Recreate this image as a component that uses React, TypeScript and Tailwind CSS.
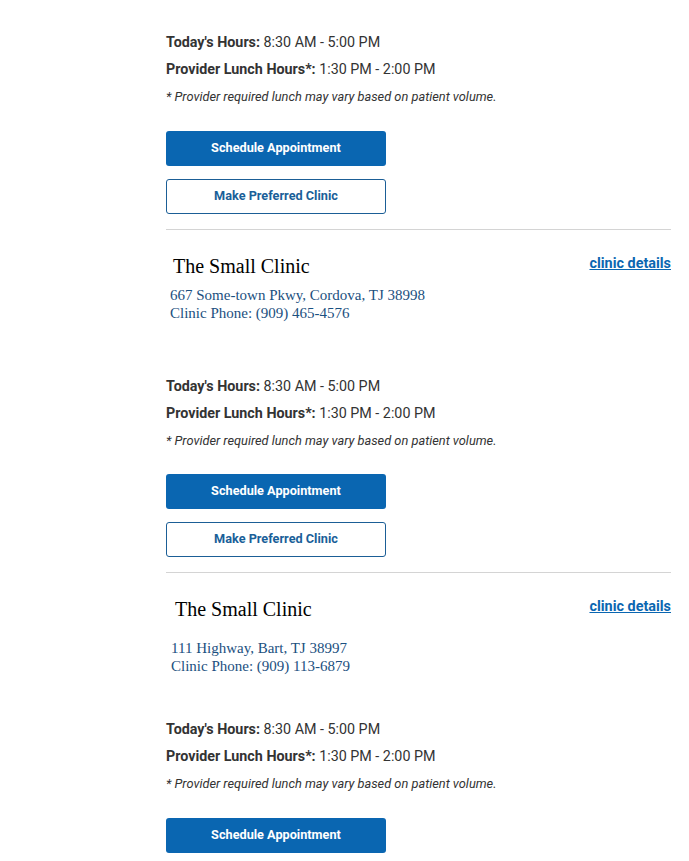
import React from "react";

const roboto = { fontFamily: "Roboto, 'Liberation Sans', sans-serif" };

function Hours() {
  return (
    <div className="font-['Roboto','Liberation_Sans',sans-serif] text-[#333333]">
      <p className="text-[14.3px] leading-[20px]">
        <span className="font-bold">Today's Hours:</span> 8:30 AM - 5:00 PM
      </p>
      <p className="mt-[7px] text-[14.3px] leading-[20px]">
        <span className="font-bold">Provider Lunch Hours*:</span> 1:30 PM - 2:00 PM
      </p>
      <p className="mt-[10px] text-[12.8px] leading-[16px] italic">
        * Provider required lunch may vary based on patient volume.
      </p>
    </div>
  );
}

function Buttons({ second = true, top = "mt-[26px]" }: { second?: boolean; top?: string }) {
  return (
    <div className={`${top} flex flex-col gap-[13px] font-['Roboto','Liberation_Sans',sans-serif]`}>
      <button className="h-[35px] w-[220px] rounded-[3px] bg-[#0a66b1] pb-[2px] text-[12.7px] font-bold text-white">
        Schedule Appointment
      </button>
      {second && (
        <button className="h-[35px] w-[220px] rounded-[3px] border border-[#1b5e96] bg-white pb-[2px] text-[12.7px] font-bold text-[#1a5f99]">
          Make Preferred Clinic
        </button>
      )}
    </div>
  );
}

function Header({
  address,
  phone,
  titlePad,
  addrPad,
  addrGap,
}: {
  address: string;
  phone: string;
  titlePad: string;
  addrPad: string;
  addrGap: string;
}) {
  return (
    <div>
      <div className="flex items-start justify-between">
        <h2 className={`font-['Liberation_Serif',serif] text-[20px] leading-[24px] text-black ${titlePad}`}>
          The Small Clinic
        </h2>
        <a
          href="#"
          className="font-['Roboto','Liberation_Sans',sans-serif] text-[14.4px] font-bold leading-[20px] text-[#0a66b1] underline"
        >
          clinic details
        </a>
      </div>
      <div className={`font-['Liberation_Serif',serif] text-[15px] leading-[18px] text-[#1b5080] ${addrPad} ${addrGap}`}>
        <p>{address}</p>
        <p>Clinic Phone: {phone}</p>
      </div>
    </div>
  );
}

export default function App() {
  return (
    <div className="min-h-[861px] w-[689px] overflow-hidden bg-white" style={roboto}>
      <div className="ml-[166px] mr-[18px] pt-[32px]">
        {/* Section 1 (top cut) */}
        <Hours />
        <Buttons />
        <div className="mt-[15px] h-px bg-[#d4d4d4]" />

        {/* Section 2 */}
        <div className="pt-[24px]">
          <Header
            address="667 Some-town Pkwy, Cordova, TJ 38998"
            phone="(909) 465-4576"
            titlePad="pl-[7px]"
            addrPad="pl-[4px]"
            addrGap="mt-[8px]"
          />
          <div className="mt-[54px]">
            <Hours />
          </div>
          <Buttons top="mt-[25px]" />
          <div className="mt-[15px] h-px bg-[#d4d4d4]" />
        </div>

        {/* Section 3 */}
        <div className="pt-[24px]">
          <Header
            address="111 Highway, Bart, TJ 38997"
            phone="(909) 113-6879"
            titlePad="pl-[9px]"
            addrPad="pl-[5px]"
            addrGap="mt-[18px]"
          />
          <div className="mt-[44px]">
            <Hours />
          </div>
          <Buttons second={false} top="mt-[26px]" />
        </div>
      </div>
    </div>
  );
}
